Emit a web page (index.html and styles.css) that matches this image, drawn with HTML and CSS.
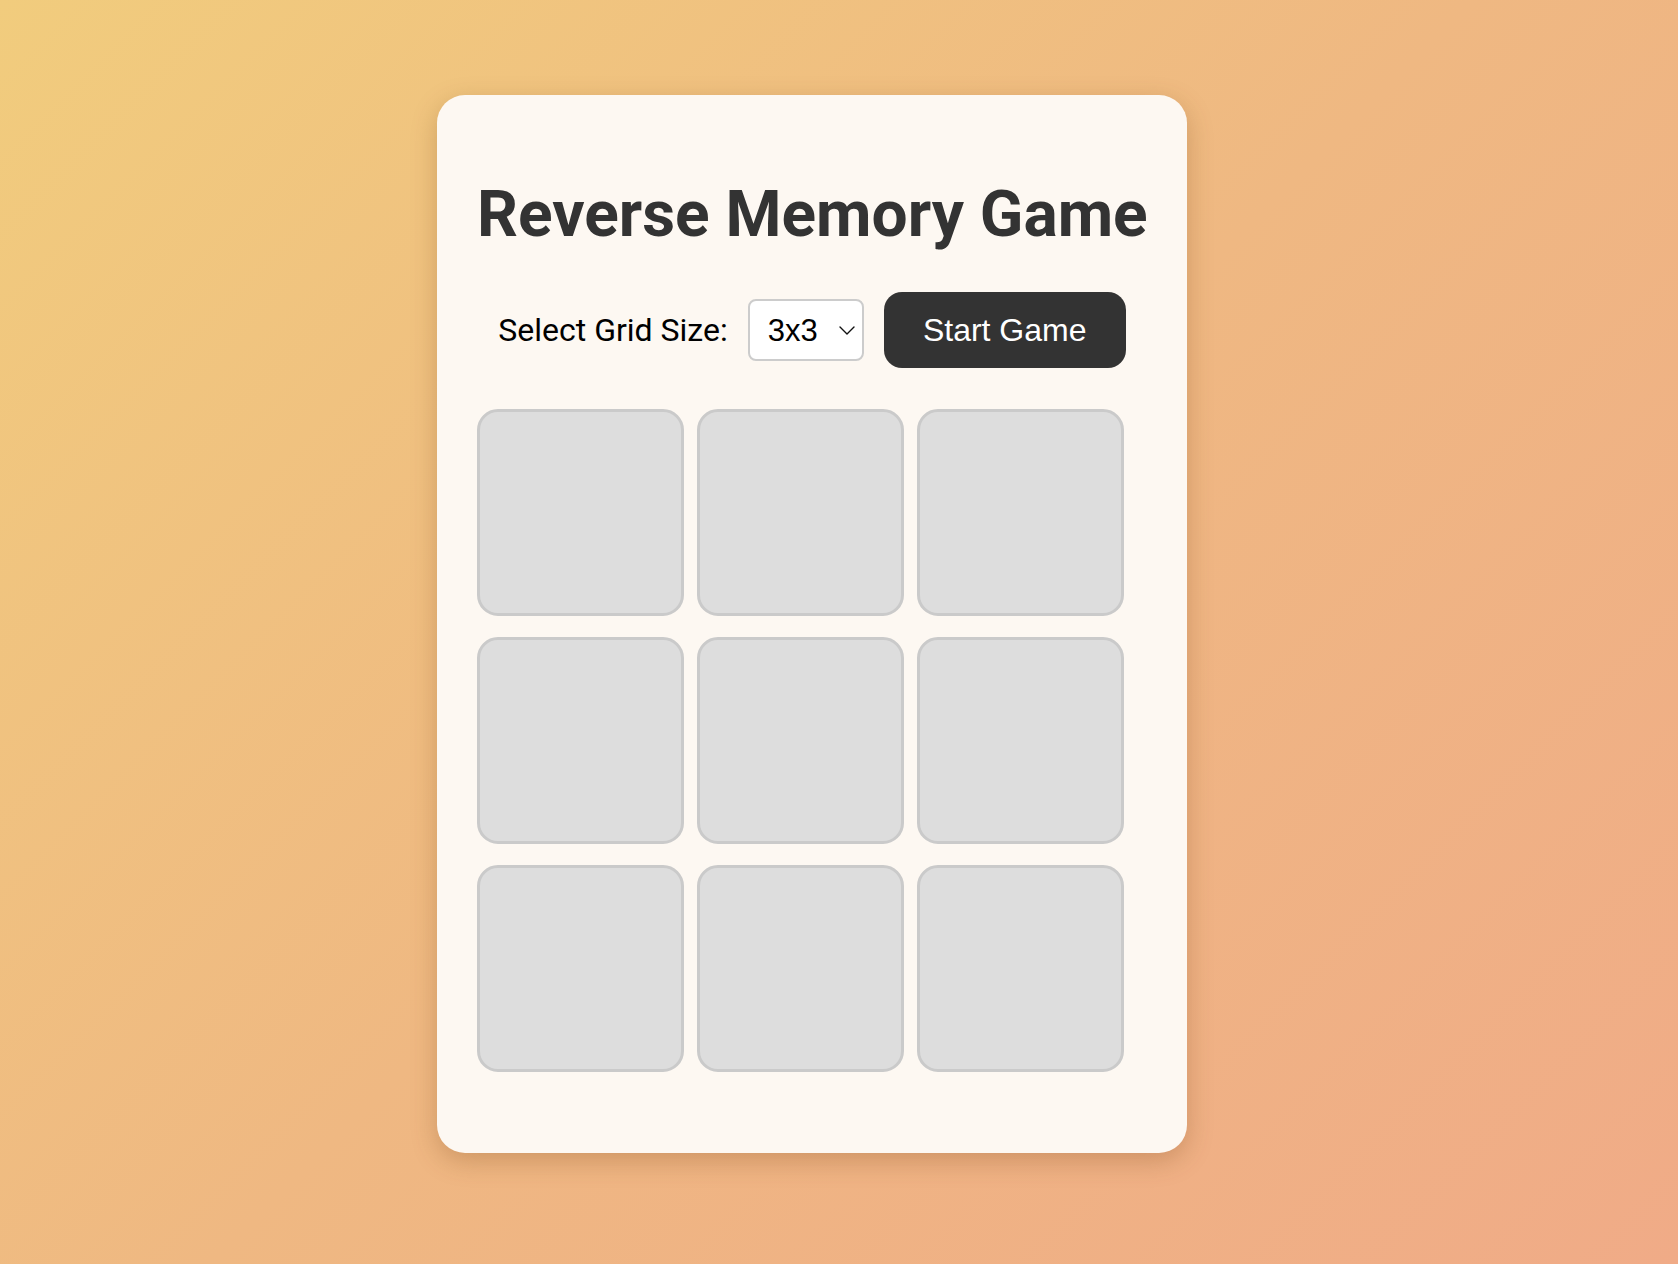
FILE: index.html
```html
<!DOCTYPE html>
<html lang="en">
<head>
    <meta charset="UTF-8">
    <meta name="viewport" content="width=device-width, initial-scale=1.0">
    <title>Reverse Memory Game</title>
    <link rel="stylesheet" href="styles.css">
</head>
<body>
    <div class="game-card">
        <h1>Reverse Memory Game</h1>

        <div class="controls">
            <label for="grid-size">Select Grid Size:</label>
            <div class="select-wrap">
                <select id="grid-size">
                    <option value="3">3x3</option>
                    <option value="4">4x4</option>
                    <option value="5">5x5</option>
                </select>
                <svg class="select-arrow" width="16" height="9" viewBox="0 0 16 9">
                    <path d="M1 1 L8 8 L15 1" fill="none" stroke="#111" stroke-width="1.4" stroke-linecap="round" stroke-linejoin="round"/>
                </svg>
            </div>
            <button class="start-btn">Start Game</button>
        </div>

        <div class="board">
            <div class="tile"></div>
            <div class="tile"></div>
            <div class="tile"></div>
            <div class="tile"></div>
            <div class="tile"></div>
            <div class="tile"></div>
            <div class="tile"></div>
            <div class="tile"></div>
            <div class="tile"></div>
        </div>
    </div>
</body>
</html>
```

FILE: styles.css
```css
* {
    box-sizing: border-box;
}

html, body {
    height: 100%;
}

body {
    margin: 0;
    padding: 95px 54px 0 0;
    display: flex;
    justify-content: center;
    align-items: flex-start;
    font-family: Roboto, 'Noto Sans', sans-serif;
    background: linear-gradient(135deg, #f1cc7d 0%, #efb882 50%, #f0ab87 100%);
    overflow: hidden;
}

.game-card {
    width: 750px;
    height: 1058px;
    padding: 40px;
    background: #fdf8f2;
    border-radius: 28px;
    box-shadow: 0 8px 26px rgba(120, 70, 20, 0.28);
}

h1 {
    margin: 42px 0 0;
    font-size: 64px;
    font-weight: 700;
    line-height: normal;
    color: #333;
    text-align: center;
    white-space: nowrap;
}

.controls {
    display: flex;
    align-items: center;
    justify-content: center;
    gap: 20px;
    margin-top: 40px;
}

.controls label {
    font-size: 32px;
    color: #000;
}

.select-wrap {
    position: relative;
}

.select-wrap select {
    -webkit-appearance: none;
    appearance: none;
    width: 116px;
    height: 62px;
    padding: 0 0 0 18px;
    font-family: 'Liberation Sans', Arial, sans-serif;
    font-size: 31px;
    color: #000;
    background: #fff;
    border: 2px solid #ccc;
    border-radius: 8px;
}

.select-arrow {
    position: absolute;
    top: 27px;
    right: 9px;
    pointer-events: none;
}

.start-btn {
    width: 242px;
    height: 76px;
    padding: 0;
    font-family: 'Liberation Sans', Arial, sans-serif;
    font-size: 32px;
    color: #fff;
    background: #333;
    border: none;
    border-radius: 18px;
    cursor: pointer;
}

.board {
    display: grid;
    grid-template-columns: repeat(3, 207px);
    grid-auto-rows: 207px;
    column-gap: 13px;
    row-gap: 21px;
    margin-top: 41px;
}

.tile {
    background: #dddddd;
    border: 3px solid #cacaca;
    border-radius: 21px;
}
```
